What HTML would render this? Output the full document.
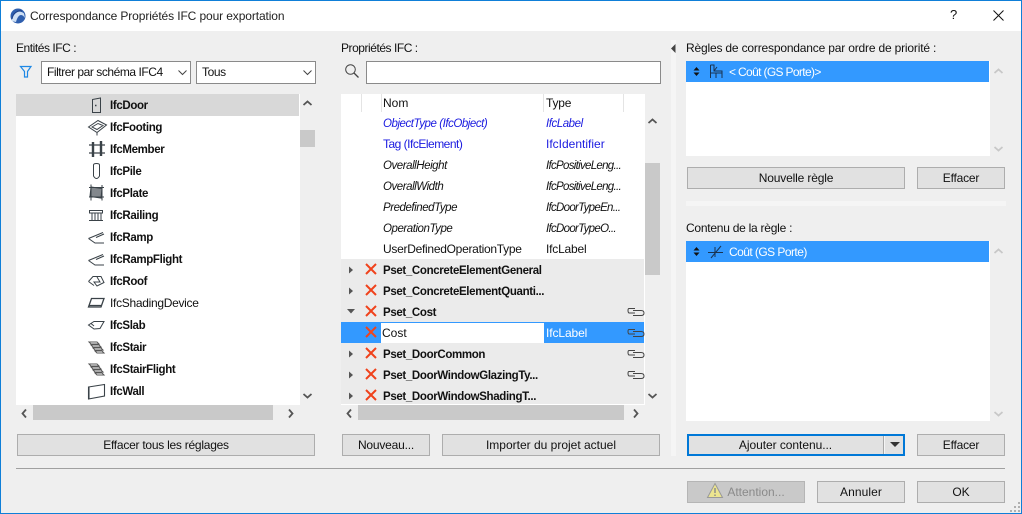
<!DOCTYPE html>
<html><head><meta charset="utf-8">
<style>
html,body{margin:0;padding:0}
body{width:1022px;height:514px;position:relative;overflow:hidden;background:#efefef;font:12px/16px "Liberation Sans",sans-serif;color:#111}
div,svg{position:absolute}
svg{overflow:visible}
.t{white-space:nowrap;height:16px}
.b{font-weight:bold;font-size:11.5px;letter-spacing:-.35px;margin-top:1px}
.i{font-style:italic;font-size:11.5px;letter-spacing:-.45px;margin-top:1px}
.n{letter-spacing:-.7px}
.bl{color:#1a1ae0}
.btn{box-sizing:border-box;height:22px;background:#e1e1e1;border:1px solid #adadad;text-align:center;line-height:20px;white-space:nowrap}
.w{background:#fff}
.sel{background:#3399ff}
.thumb{background:#c9c9c9}
.inp{box-sizing:border-box;height:23px;background:#fff;border:1px solid #8a8a8a}
.g{background:#ebebeb}
</style></head><body>
<div class="w" style="left:0;top:0;width:1022px;height:31px"></div>
<div style="left:0;top:0;width:1022px;height:1px;background:#0f7fd8"></div>
<div style="left:0;top:0;width:1px;height:514px;background:#0f7fd8"></div>
<div style="left:1021px;top:0;width:1px;height:514px;background:#0f7fd8"></div>
<div style="left:0;top:513px;width:1022px;height:1px;background:#0f7fd8"></div>

<svg style="left:10px;top:8px" width="16" height="16" viewBox="0 0 16 16"><circle cx="8" cy="8" r="7.5" fill="#2f5fae"/><path d="M1.5 13C3 5 9 1 14 5.5L15 10C12 5 8 6 6 14Z" fill="#cfe0f4"/><path d="M2 11C3 5 8 2 12 3" stroke="#1d3f86" fill="none"/></svg>
<div class="t" style="left:30px;top:8px;letter-spacing:-.11px;color:#222">Correspondance Propriétés IFC pour exportation</div>
<div class="t" style="left:950px;top:7px;font-size:13px">?</div>
<svg style="left:993px;top:10px" width="11" height="11"><path d="M.5.5L10.5 10.5M10.5.5L.5 10.5" stroke="#111" fill="none"/></svg>

<!-- LEFT -->
<div class="t" style="left:16px;top:40px;letter-spacing:-.45px">Entités IFC :</div>
<svg style="left:20px;top:66px" width="12" height="12"><path d="M.5.5H11L7.5 5.5V11H4.5V5.5Z" fill="none" stroke="#1e88e5" stroke-width="1.2"/></svg>
<div class="inp" style="left:41px;top:61px;width:150px"></div>
<div class="t" style="left:47px;top:64px;letter-spacing:-.45px">Filtrer par schéma IFC4</div>
<svg style="left:178px;top:70px" width="9" height="6"><path d="M.5.5L4.5 4.5L8.5.5" fill="none" stroke="#444"/></svg>
<div class="inp" style="left:196px;top:61px;width:120px"></div>
<div class="t" style="left:202px;top:64px;letter-spacing:-.4px">Tous</div>
<svg style="left:303px;top:70px" width="9" height="6"><path d="M.5.5L4.5 4.5L8.5.5" fill="none" stroke="#444"/></svg>

<div class="w" style="left:16px;top:94px;width:284px;height:311px"></div>
<div style="left:16px;top:94px;width:283px;height:22px;background:#d8d8d8"></div>
<div class="t b" style="left:110px;top:97px">IfcDoor</div>
<div class="t b" style="left:110px;top:119px">IfcFooting</div>
<div class="t b" style="left:110px;top:141px">IfcMember</div>
<div class="t b" style="left:110px;top:163px">IfcPile</div>
<div class="t b" style="left:110px;top:185px">IfcPlate</div>
<div class="t b" style="left:110px;top:207px">IfcRailing</div>
<div class="t b" style="left:110px;top:229px">IfcRamp</div>
<div class="t b" style="left:110px;top:251px">IfcRampFlight</div>
<div class="t b" style="left:110px;top:273px">IfcRoof</div>
<div class="t" style="left:110px;top:295px;letter-spacing:-.3px">IfcShadingDevice</div>
<div class="t b" style="left:110px;top:317px">IfcSlab</div>
<div class="t b" style="left:110px;top:339px">IfcStair</div>
<div class="t b" style="left:110px;top:361px">IfcStairFlight</div>
<div class="t b" style="left:110px;top:383px">IfcWall</div>
<svg style="left:0;top:0" width="300" height="405" fill="none" stroke="#3a4248" stroke-width="1">
<path d="M92.500 99.500L100.500 98V112.500H92.500Z"/><path d="M95 105.500h1.500" stroke-width="1.500"/>
<path d="M88.500 127L98 120.500L106.500 125L97 132.500ZM92 127L98 123.500L103 125.500L97 129.500ZM97 132.500V135.500"/>
<path d="M93 142V157M101 141V156" stroke-width="2.400"/><path d="M89 145H105M89 153H105" stroke-width="1.300"/>
<path d="M93.500 165Q93.500 163.500 96.500 163.500T99.500 165V176Q96.500 181 93.500 176Z"/>
<path d="M91 187L102 188.500L101 198L90 196.500Z" fill="#83888d"/><path d="M89 187.500H104M89 197H104M91 184.500V200.500M102 185V200.500"/>
<path d="M89 210.500H103M89.500 210.500V213M102.500 210.500V213M89 213H103M89 220.500H103M92 213V220M95 213V220M98 213V220M101 213V220"/>
<path d="M88.500 238.500L103 232.500M88.500 238.500L95 243H104M96 237.500L104 234"/>
<path d="M88.500 260.500L103 254.500M88.500 260.500L95 265H104M96 259.500L104 256"/>
<path d="M88.500 281.500L93 276.500H101L104 282.500L97 286L94 282H100L97 277M88.500 281.500L94 285.500"/>
<path d="M88.500 307H101L104 298.500H91.500ZM88.500 305.500H101.500" stroke-width="1.300"/>
<path d="M88.500 325L94 321.500H104L100 328.500L94 329ZM91 323.500L94 326"/>
<path d="M89 342H97L99 344H91ZM91 345H99L101 347H93ZM93 348H101L103 350H95ZM95 351H102L104 353H97Z" stroke="#555"/>
<path d="M89 364H97L99 366H91ZM91 367H99L101 369H93ZM93 370H101L103 372H95ZM95 373H102L104 375H97Z" stroke="#555"/>
<path d="M88.500 387L104.500 384.500V396L88.500 399ZM89 387V399" stroke-width="1.100"/>
</svg>
<svg style="left:303px;top:100px" width="9" height="6"><path d="M.5 5L4.5 1.5L8.5 5" fill="none" stroke="#555" stroke-width="1.800"/></svg>
<div class="thumb" style="left:300px;top:130px;width:15px;height:17px"></div>
<svg style="left:303px;top:393px" width="9" height="6"><path d="M.5 1L4.5 4.5L8.5 1" fill="none" stroke="#555" stroke-width="1.800"/></svg>
<svg style="left:21px;top:409px" width="6" height="9"><path d="M5 .5L1.500 4.500L5 8.500" fill="none" stroke="#555" stroke-width="1.800"/></svg>
<div class="thumb" style="left:33px;top:405px;width:240px;height:15px"></div>
<svg style="left:288px;top:409px" width="6" height="9"><path d="M1 .5L4.500 4.500L1 8.500" fill="none" stroke="#555" stroke-width="1.800"/></svg>
<div class="btn" style="left:17px;top:434px;width:298px;letter-spacing:-.25px">Effacer tous les réglages</div>

<!-- MIDDLE -->
<div class="t" style="left:341px;top:40px;letter-spacing:-.46px">Propriétés IFC :</div>
<svg style="left:345px;top:64px" width="14" height="14" fill="none" stroke="#444"><circle cx="5.500" cy="5.500" r="4.800"/><path d="M9 9L13.500 13.500" stroke-width="1.300"/></svg>
<div class="inp" style="left:366px;top:61px;width:295px"></div>
<div class="w" style="left:341px;top:94px;width:304px;height:311px"></div>
<div style="left:361px;top:94px;width:1px;height:18px;background:#e4e4e4"></div>
<div style="left:381px;top:94px;width:1px;height:18px;background:#e4e4e4"></div>
<div style="left:543px;top:94px;width:1px;height:18px;background:#e4e4e4"></div>
<div style="left:623px;top:94px;width:1px;height:18px;background:#e4e4e4"></div>
<div class="t" style="left:383px;top:95px">Nom</div>
<div class="t" style="left:546px;top:95px;letter-spacing:-.2px">Type</div>
<div class="t i bl" style="left:383px;top:115px">ObjectType (IfcObject)</div>
<div class="t i bl" style="left:546px;top:115px">IfcLabel</div>
<div class="t bl" style="left:383px;top:136px;letter-spacing:-.5px">Tag (IfcElement)</div>
<div class="t bl" style="left:546px;top:136px">IfcIdentifier</div>
<div class="t i" style="left:383px;top:157px">OverallHeight</div>
<div class="t i n" style="left:546px;top:157px">IfcPositiveLeng...</div>
<div class="t i" style="left:383px;top:178px">OverallWidth</div>
<div class="t i n" style="left:546px;top:178px">IfcPositiveLeng...</div>
<div class="t i" style="left:383px;top:199px">PredefinedType</div>
<div class="t i n" style="left:546px;top:199px">IfcDoorTypeEn...</div>
<div class="t i" style="left:383px;top:220px">OperationType</div>
<div class="t i n" style="left:546px;top:220px">IfcDoorTypeO...</div>
<div class="t" style="left:383px;top:241px;letter-spacing:-.28px">UserDefinedOperationType</div>
<div class="t" style="left:546px;top:241px;letter-spacing:-.2px">IfcLabel</div>

<div class="g" style="left:341px;top:259px;width:303px;height:63px"></div>
<div class="sel" style="left:341px;top:322px;width:303px;height:21px"></div>
<div class="g" style="left:341px;top:343px;width:303px;height:61px"></div>
<div class="w" style="left:381px;top:323px;width:163px;height:20px"></div>
<div class="t b" style="left:383px;top:262px">Pset_ConcreteElementGeneral</div>
<div class="t b" style="left:383px;top:283px">Pset_ConcreteElementQuanti...</div>
<div class="t b" style="left:383px;top:304px">Pset_Cost</div>
<div class="t" style="left:382px;top:325px">Cost</div>
<div class="t" style="left:546px;top:325px;color:#fff;letter-spacing:-.1px">IfcLabel</div>
<div class="t b" style="left:383px;top:346px">Pset_DoorCommon</div>
<div class="t b" style="left:383px;top:367px">Pset_DoorWindowGlazingTy...</div>
<div class="t b" style="left:383px;top:388px">Pset_DoorWindowShadingT...</div>
<svg style="left:341px;top:259px" width="303" height="146">
<g fill="#555"><path d="M8 7.500L12 11L8 14.500Z"/><path d="M8 28.500L12 32L8 35.500Z"/><path d="M6 50H14L10 54.500Z"/><path d="M8 91.500L12 95L8 98.500Z"/><path d="M8 112.500L12 116L8 119.500Z"/><path d="M8 133.500L12 137L8 140.500Z"/></g>
<g stroke="#f0421c" stroke-width="2" fill="none"><path d="M25 5L35 15M35 5L25 15"/><path d="M25 26L35 36M35 26L25 36"/><path d="M25 47L35 57M35 47L25 57"/><path d="M25 68L35 78M35 68L25 78"/><path d="M25 89L35 99M35 89L25 99"/><path d="M25 110L35 120M35 110L25 120"/><path d="M25 131L35 141M35 131L25 141"/></g>
<g fill="none" stroke="#444"><path d="M294 49.500H288Q287 49.500 287 51.500T288 54H294M292 51.500H300Q303 51.500 303 54T300 56.500H292"/><path d="M294 70.500H288Q287 70.500 287 72.500T288 75H294M292 72.500H300Q303 72.500 303 75T300 77.500H292"/><path d="M294 91.500H288Q287 91.500 287 93.500T288 96H294M292 93.500H300Q303 93.500 303 96T300 98.500H292"/><path d="M294 112.500H288Q287 112.500 287 114.500T288 117H294M292 114.500H300Q303 114.500 303 117T300 119.500H292"/></g>
</svg>
<svg style="left:648px;top:118px" width="9" height="6"><path d="M.5 5L4.500 1.500L8.500 5" fill="none" stroke="#555" stroke-width="1.800"/></svg>
<div class="thumb" style="left:645px;top:163px;width:15px;height:112px"></div>
<svg style="left:648px;top:393px" width="9" height="6"><path d="M.5 1L4.500 4.500L8.500 1" fill="none" stroke="#555" stroke-width="1.800"/></svg>
<svg style="left:346px;top:409px" width="6" height="9"><path d="M5 .5L1.500 4.500L5 8.500" fill="none" stroke="#555" stroke-width="1.800"/></svg>
<div class="thumb" style="left:358px;top:405px;width:266px;height:15px"></div>
<svg style="left:633px;top:409px" width="6" height="9"><path d="M1 .5L4.500 4.500L1 8.500" fill="none" stroke="#555" stroke-width="1.800"/></svg>
<div class="btn" style="left:342px;top:434px;width:88px;letter-spacing:-.2px">Nouveau...</div>
<div class="btn" style="left:442px;top:434px;width:218px">Importer du projet actuel</div>

<!-- DIVIDER -->
<div style="left:671px;top:40px;width:5px;height:416px;background:#f5f5f5"></div>
<svg style="left:671px;top:44px" width="5" height="9"><path d="M4.500 0V9L0 4.500Z" fill="#444"/></svg>

<!-- RIGHT -->
<div class="t" style="left:686px;top:40px;letter-spacing:-.18px">Règles de correspondance par ordre de priorité :</div>
<div class="w" style="left:686px;top:61px;width:304px;height:95px"></div>
<div class="sel" style="left:686px;top:61px;width:303px;height:21px"></div>
<svg style="left:693px;top:67px" width="7" height="10" fill="#111"><path d="M3.500 0L6.500 3.500H.5ZM3.500 9L.5 5.500H6.500Z"/></svg>
<svg style="left:709px;top:64px" width="14" height="15" fill="none" stroke="#1a3350"><path d="M1.500 1V14M1.500 1H5V7H13V14M1.500 9H13M7 9V14M5 7L8 3"/></svg>
<div class="t" style="left:729px;top:64px;color:#fff;letter-spacing:-.65px">&lt; Coût (GS Porte)&gt;</div>
<svg style="left:994px;top:68px" width="9" height="6"><path d="M.5 5L4.500 1.500L8.500 5" fill="none" stroke="#c8c8c8" stroke-width="1.800"/></svg>
<svg style="left:994px;top:146px" width="9" height="6"><path d="M.5 1L4.500 4.500L8.500 1" fill="none" stroke="#c8c8c8" stroke-width="1.800"/></svg>
<div class="btn" style="left:687px;top:167px;width:218px;letter-spacing:-.15px">Nouvelle règle</div>
<div class="btn" style="left:917px;top:167px;width:88px;letter-spacing:-.2px">Effacer</div>
<div style="left:686px;top:201px;width:320px;height:5px;background:#f5f5f5"></div>
<div class="t" style="left:686px;top:220px;letter-spacing:-.25px">Contenu de la règle :</div>
<div class="w" style="left:686px;top:241px;width:304px;height:180px"></div>
<div class="sel" style="left:686px;top:241px;width:303px;height:21px"></div>
<svg style="left:693px;top:247px" width="7" height="10" fill="#111"><path d="M3.500 0L6.500 3.500H.5ZM3.500 9L.5 5.500H6.500Z"/></svg>
<svg style="left:708px;top:245px" width="16" height="14" fill="none" stroke="#1a3350"><path d="M0 7.500H15M3 13L13 1M7 2V12"/></svg>
<div class="t" style="left:729px;top:244px;color:#fff;letter-spacing:-.55px">Coût (GS Porte)</div>
<svg style="left:994px;top:248px" width="9" height="6"><path d="M.5 5L4.500 1.500L8.500 5" fill="none" stroke="#c8c8c8" stroke-width="1.800"/></svg>
<svg style="left:994px;top:411px" width="9" height="6"><path d="M.5 1L4.500 4.500L8.500 1" fill="none" stroke="#c8c8c8" stroke-width="1.800"/></svg>
<div class="btn" style="left:687px;top:434px;width:218px;border:2px solid #0078d7;line-height:18px;padding-right:21px;letter-spacing:-.05px">Ajouter contenu...</div>
<div style="left:883px;top:436px;width:1px;height:18px;background:#a8a8a8"></div>
<div style="left:884px;top:436px;width:1px;height:18px;background:#f5f5f5"></div>
<svg style="left:890px;top:442px" width="10" height="5"><path d="M0 0H10L5 5Z" fill="#333"/></svg>
<div class="btn" style="left:917px;top:434px;width:88px;letter-spacing:-.2px">Effacer</div>

<!-- FOOTER -->
<div style="left:16px;top:468px;width:989px;height:1px;background:#a0a0a0"></div>
<div class="btn" style="left:687px;top:481px;width:118px;background:#c9c9c9;border-color:#b5b5b5;color:#8a8a8a;padding-left:20px">Attention...</div>
<svg style="left:707px;top:483px" width="16" height="15"><path d="M8 .5L15.500 14.500H.5Z" fill="#ece58f" stroke="#999"/><path d="M8 5V10M8 11.500V13" stroke="#888" stroke-width="1.400"/></svg>
<div class="btn" style="left:817px;top:481px;width:88px;letter-spacing:.1px">Annuler</div>
<div class="btn" style="left:917px;top:481px;width:88px">OK</div>
<svg style="left:1010px;top:502px" width="10" height="10" fill="#b0b0b0"><path d="M8 0h2v2H8zM4 4h2v2H4zM8 4h2v2H8zM0 8h2v2H0zM4 8h2v2H4zM8 8h2v2H8z"/></svg>
</body></html>
